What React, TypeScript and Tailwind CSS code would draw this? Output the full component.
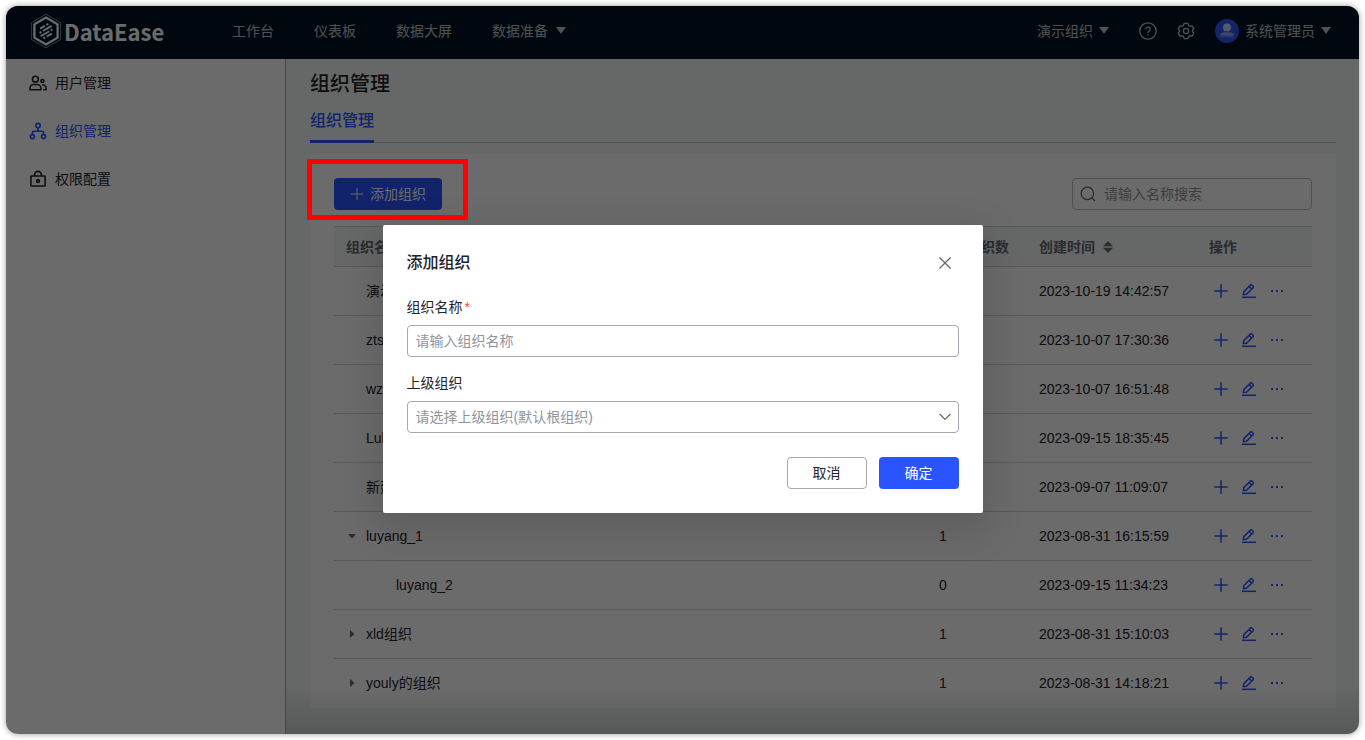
import { useState } from "react";
import type { ReactNode } from "react";

interface Org {
  name: string;
  count: number;
  time: string;
  level?: number;
  state?: "open" | "closed";
}

const ORGS: Org[] = [
  { name: "演示组织", count: 0, time: "2023-10-19 14:42:57" },
  { name: "zts组织", count: 0, time: "2023-10-07 17:30:36" },
  { name: "wz组织", count: 0, time: "2023-10-07 16:51:48" },
  { name: "Lul组织", count: 0, time: "2023-09-15 18:35:45" },
  { name: "新建组织", count: 0, time: "2023-09-07 11:09:07" },
  { name: "luyang_1", count: 1, time: "2023-08-31 16:15:59", state: "open" },
  { name: "luyang_2", count: 0, time: "2023-09-15 11:34:23", level: 1 },
  { name: "xld组织", count: 1, time: "2023-08-31 15:10:03", state: "closed" },
  { name: "youly的组织", count: 1, time: "2023-08-31 14:18:21", state: "closed" },
];

const NAV = ["工作台", "仪表板", "数据大屏"];

function Caret() {
  return (
    <svg viewBox="0 0 10 7" className="w-2.5 shrink-0" fill="currentColor">
      <path d="M0 0h10L5 7z" />
    </svg>
  );
}

function LogoMark() {
  return (
    <svg viewBox="0 0 32 36" className="h-9 w-8" fill="none" stroke="currentColor">
      <path d="M16 1.2 30.6 9.6v16.8L16 34.8 1.4 26.4V9.6z" strokeWidth="0.7" opacity="0.7" />
      <path d="M16 4.600 27.600 11.300v13.400L16 31.400 4.400 24.700V11.300z" strokeWidth="2.3" />
      <g strokeWidth="1.900">
        <path d="M10.200 15.600l4.600-2.700M16.400 12l2-1.200" />
        <path d="M9.600 19.800l1.800-1M12.800 18l8.800-5.100" />
        <path d="M10.600 23.200l8.600-5M20.600 17.400l1.800-1" />
        <path d="M13.400 25.400l1.800-1M16.800 23.500l5-2.900" />
      </g>
    </svg>
  );
}

function UsersIcon() {
  return (
    <svg viewBox="0 0 18 18" className="size-4.5" fill="none" stroke="currentColor" strokeWidth="1.6">
      <circle cx="6.4" cy="5.2" r="2.9" />
      <path d="M1 15.8v-1.700a3.6 3.6 0 0 1 3.6-3.6h3.6a3.6 3.6 0 0 1 3.6 3.600v1.700z" />
      <circle cx="13.4" cy="7" r="1.5" />
      <path d="M13.2 11h1a2.6 2.6 0 0 1 2.7 2.600v2.100h-2.6" />
    </svg>
  );
}

function OrgIcon() {
  return (
    <svg viewBox="0 0 18 18" className="size-4.5" fill="none" stroke="currentColor" strokeWidth="1.6">
      <circle cx="9" cy="3.6" r="2.2" />
      <circle cx="3.4" cy="14.6" r="2" />
      <circle cx="14.6" cy="14.6" r="2" />
      <path d="M9 5.8v3.4M3.4 12.6v-1.800a1.6 1.6 0 0 1 1.6-1.6h8a1.6 1.6 0 0 1 1.6 1.600v1.800" />
    </svg>
  );
}

function LockIcon() {
  return (
    <svg viewBox="0 0 18 18" className="size-4.5" fill="none" stroke="currentColor" strokeWidth="1.6">
      <rect x="1.9" y="6" width="14.2" height="10" rx="0.6" />
      <path d="M5.6 6V4.8a3.4 3.4 0 0 1 6.800 0V6" />
      <circle cx="9" cy="11" r="1.4" />
    </svg>
  );
}

function PlusIcon() {
  return (
    <svg viewBox="0 0 16 16" className="size-4" fill="none" stroke="currentColor" strokeWidth="1.5">
      <path d="M8 1.3v13.4M1.3 8h13.4" />
    </svg>
  );
}

function EditIcon() {
  return (
    <svg viewBox="0 0 16 16" className="size-4" fill="none" stroke="currentColor" strokeWidth="1.5">
      <path d="M2.4 11.6l.4-3 6.600-6.600a1 1 0 0 1 1.400 0l1.300 1.300a1 1 0 0 1 0 1.400l-6.600 6.500z" />
      <path d="M8.2 3.6l2.600 2.600" />
      <path d="M1 14.300h14" />
    </svg>
  );
}

function MoreIcon() {
  return (
    <svg viewBox="0 0 16 16" className="size-4" fill="currentColor">
      <rect x="2" y="7" width="2" height="2" rx="0.5" />
      <rect x="7" y="7" width="2" height="2" rx="0.5" />
      <rect x="12" y="7" width="2" height="2" rx="0.5" />
    </svg>
  );
}

function HelpIcon() {
  return (
    <svg viewBox="0 0 18 18" className="size-4.5" fill="none" stroke="currentColor" strokeWidth="1.3">
      <circle cx="9" cy="9" r="8.2" />
      <path d="M6.8 7.3a2.2 2.2 0 1 1 3.3 1.900c-.7.4-1.1.8-1.1 1.700" />
      <path d="M9 12.2v1.4" />
    </svg>
  );
}

function GearIcon() {
  return (
    <svg viewBox="0 0 18 18" className="size-4.5" fill="none" stroke="currentColor" strokeWidth="1.3" strokeLinejoin="round">
      <path d="M7.2 1.4h3.6l.8 2 1.3.8 2.1-.4 1.8 3.1-1.300 1.600v1l1.300 1.600-1.800 3.100-2.100-.4-1.300.8-.8 2H7.200l-.8-2-1.300-.8-2.100.4-1.800-3.100 1.300-1.600v-1L1.200 6.900 3 3.800l2.100.4 1.300-.8z" />
      <circle cx="9" cy="9" r="2.6" />
    </svg>
  );
}

function Avatar() {
  return (
    <svg viewBox="0 0 24 24" className="size-6">
      <defs>
        <linearGradient id="body" x1="0" y1="0" x2="0" y2="1">
          <stop offset="0" stopColor="#b9c8ff" />
          <stop offset="1" stopColor="#3a60f8" />
        </linearGradient>
      </defs>
      <circle cx="12" cy="12" r="12" fill="#2e57f5" />
      <circle cx="12" cy="8.5" r="4" fill="#d0daff" />
      <path d="M5 19v-1.500a4 4 0 0 1 4-4h6a4 4 0 0 1 4 4V19z" fill="url(#body)" />
    </svg>
  );
}

function SideItem({ icon, label, active }: { icon: ReactNode; label: string; active?: boolean }) {
  return (
    <a
      href="#"
      className={
        active
          ? "flex h-12 items-center gap-2 pl-[23px] text-[#2954ff]"
          : "flex h-12 items-center gap-2 pl-[23px]"
      }
    >
      {icon}
      {label}
    </a>
  );
}

function OrgTable() {
  return (
    <table className="mt-4 w-full table-fixed border-collapse text-left">
      <thead>
        <tr className="h-10 border-y border-[#cdd1d4] bg-[#f3f8f6] text-[#646a73]">
          <th className="px-3 font-semibold">组织名称</th>
          <th className="w-[100px] px-3 font-semibold whitespace-nowrap">下属组织数</th>
          <th className="w-[170px] px-3 font-semibold">
            <span className="flex items-center gap-2">
              创建时间
              <svg viewBox="0 0 10 12" className="w-2.5" fill="currentColor">
                <path d="M0 5.200h10L5 0zM0 6.800h10L5 12z" />
              </svg>
            </span>
          </th>
          <th className="w-[115px] px-3 font-semibold">操作</th>
        </tr>
      </thead>
      <tbody>
        {ORGS.map((org) => (
          <tr key={org.name} className="h-[49px] border-b border-[#cdd1d4] last:border-b-0">
            <td className="px-3">
              <div className={org.level ? "flex items-center gap-2 pl-[30px]" : "flex items-center gap-2"}>
                <span className="flex w-3 justify-center text-[#646a73]">
                  {org.state && (
                    <svg
                      viewBox="0 0 8 8"
                      className={org.state === "open" ? "size-2 rotate-90" : "size-2"}
                      fill="currentColor"
                    >
                      <path d="M2 0l4.500 4L2 8z" />
                    </svg>
                  )}
                </span>
                {org.name}
              </div>
            </td>
            <td className="px-3">{org.count}</td>
            <td className="px-3 whitespace-nowrap">{org.time}</td>
            <td className="px-3">
              <div className="flex gap-1 text-[#2954ff]">
                <button type="button" aria-label="添加" className="flex size-6 items-center justify-center">
                  <PlusIcon />
                </button>
                <button type="button" aria-label="编辑" className="flex size-6 items-center justify-center">
                  <EditIcon />
                </button>
                <button type="button" aria-label="更多" className="flex size-6 items-center justify-center">
                  <MoreIcon />
                </button>
              </div>
            </td>
          </tr>
        ))}
      </tbody>
    </table>
  );
}

function AddOrgDialog() {
  const [name, setName] = useState("");

  return (
    <form
      role="dialog"
      aria-labelledby="dialog-title"
      className="w-[600px] rounded-xs bg-white p-6 shadow-[0_12px_36px_8px_rgba(0,0,0,0.12)]"
    >
      <div className="mb-5 flex h-7 items-center justify-between">
        <h2 id="dialog-title" className="text-base leading-6 font-medium">
          添加组织
        </h2>
        <button type="button" aria-label="关闭" className="flex size-7 items-center justify-center text-[#646a73]">
          <svg viewBox="0 0 12 12" className="size-3" fill="none" stroke="currentColor" strokeWidth="1.3">
            <path d="M.4.4l11.200 11.200M11.600.4L.4 11.600" />
          </svg>
        </button>
      </div>

      <label htmlFor="org-name" className="mb-2 block leading-5">
        组织名称<span className="ml-0.5 text-[#f54a45]">*</span>
      </label>
      <input
        id="org-name"
        value={name}
        onChange={(e) => setName(e.target.value)}
        placeholder="请输入组织名称"
        className="mb-4 block h-8 w-full rounded border border-[#a6a9b3] px-2 outline-none placeholder:text-[#8f959e]"
      />

      <label htmlFor="org-parent" className="mb-2 block leading-5">
        上级组织
      </label>
      <div className="relative">
        <select
          id="org-parent"
          defaultValue=""
          className="block h-8 w-full appearance-none rounded border border-[#a6a9b3] bg-white px-2 text-[#8f959e] outline-none"
        >
          <option value="">请选择上级组织(默认根组织)</option>
        </select>
        <svg
          viewBox="0 0 12 8"
          className="pointer-events-none absolute top-3 right-2 w-3"
          fill="none"
          stroke="#646a73"
          strokeWidth="1.3"
        >
          <path d="M.6 1l5.400 5.400L11.400 1" />
        </svg>
      </div>

      <div className="mt-6 flex justify-end gap-3">
        <button type="button" className="h-8 w-20 rounded border border-[#a6a9b3]">
          取消
        </button>
        <button type="button" className="h-8 w-20 rounded bg-[#2954ff] text-white">
          确定
        </button>
      </div>
    </form>
  );
}

export default function App() {
  return (
    <div className="h-screen bg-white p-1.5 font-['Liberation_Sans','Noto_Sans_CJK_SC',sans-serif] text-sm text-[#1f2329]">
      <div className="relative flex h-full flex-col overflow-hidden rounded-xl shadow-[0_0_6px_rgba(0,0,0,0.4)]">
        {/* 顶部导航 */}
        <header className="flex h-[53px] shrink-0 items-center bg-[#001222] pr-7 pb-1 pl-6 text-[#bfc2c6]">
          <a href="#" className="flex w-[202px] items-center gap-0.5 text-white">
            <LogoMark />
            <span className="font-['Noto_Sans_CJK_SC',sans-serif] text-[22px] leading-8 font-bold">DataEase</span>
          </a>
          <nav className="flex flex-1 gap-10">
            {NAV.map((n) => (
              <a key={n} href="#">
                {n}
              </a>
            ))}
            <a href="#" className="flex items-center gap-2">
              数据准备
              <Caret />
            </a>
          </nav>
          <div className="flex items-center gap-5">
            <button type="button" className="mr-2.5 flex items-center gap-1.5">
              演示组织
              <Caret />
            </button>
            <button type="button" aria-label="帮助">
              <HelpIcon />
            </button>
            <button type="button" aria-label="设置">
              <GearIcon />
            </button>
            <button type="button" className="flex items-center gap-1.5">
              <Avatar />
              系统管理员
              <Caret />
            </button>
          </div>
        </header>

        <div className="flex min-h-0 flex-1">
          <aside className="w-70 shrink-0 border-r border-[#a6a9b3] bg-white">
            <SideItem icon={<UsersIcon />} label="用户管理" />
            <SideItem icon={<OrgIcon />} label="组织管理" active />
            <SideItem icon={<LockIcon />} label="权限配置" />
          </aside>

          <main className="relative min-w-0 flex-1 bg-[#f3f8f6] pt-2 pr-[23px] pl-6">
            <h1 className="text-xl leading-[34px] font-medium">组织管理</h1>
            <div className="flex h-[42px] border-b border-[#bbbfc4]">
              <a href="#" className="-mb-px border-b-3 border-[#2954ff] pt-2 text-base font-medium text-[#2954ff]">
                组织管理
              </a>
            </div>

            <section className="mt-[11px] bg-white px-6 pt-6">
              <div className="flex items-center justify-between">
                <div className="relative">
                  <button
                    type="button"
                    className="flex h-8 items-center gap-1.5 rounded bg-[#2954ff] px-4 text-white"
                  >
                    <svg viewBox="0 0 14 14" className="size-3.5" fill="none" stroke="currentColor">
                      <path d="M7 .8v12.400M.8 7h12.400" />
                    </svg>
                    添加组织
                  </button>
                  <div className="pointer-events-none absolute -top-[19px] -right-[26px] -bottom-2.5 -left-[27px] z-20 border-5 border-[#ff0000]" />
                </div>
                <label className="flex h-8 w-60 items-center gap-2 rounded border border-[#bbbfc4] px-[7px]">
                  <svg viewBox="0 0 16 16" className="size-4" fill="none" stroke="#646a73" strokeWidth="1.3">
                    <circle cx="7.4" cy="7.4" r="6.2" />
                    <path d="M11.800 11.800l3.200 3.200" />
                  </svg>
                  <input
                    aria-label="搜索"
                    placeholder="请输入名称搜索"
                    className="min-w-0 flex-1 outline-none placeholder:text-[#8f959e]"
                  />
                </label>
              </div>
              <OrgTable />
            </section>
            <div className="absolute inset-x-0 bottom-0 h-12 bg-linear-to-t from-black/15 to-transparent" />
          </main>
        </div>

        {/* 弹窗遮罩 */}
        <div className="absolute inset-0 z-10 flex items-center justify-center bg-black/58 pb-0.5">
          <AddOrgDialog />
        </div>
      </div>
    </div>
  );
}
